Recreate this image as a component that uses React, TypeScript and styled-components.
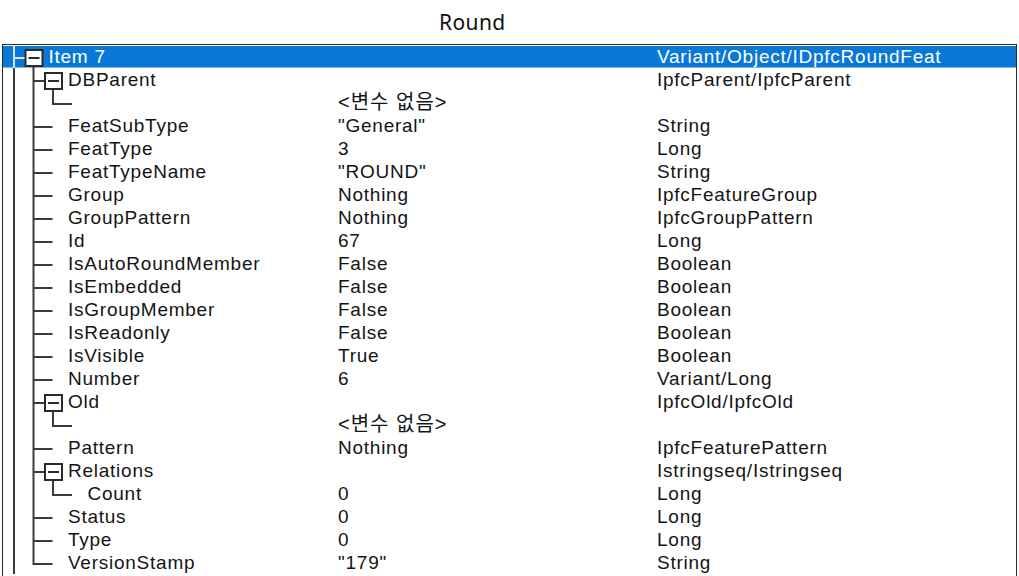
import React from "react";
import styled, { createGlobalStyle } from "styled-components";

const GlobalStyle = createGlobalStyle`
	html, body {
		margin: 0;
		height: 576px;
		overflow: hidden;
		background: #ffffff;
	}
`;

const ROW_H = 23;
const MID = 13;
// x of the tree rail for a given level, relative to the panel's content box
const lx = (k: number) => 11 + 19.5 * k;

type Row = {
	name: string;
	value?: string;
	type?: string;
	depth: number;
	open?: boolean;
	last?: boolean;
	selected?: boolean;
	empty?: boolean;
};

const rows: Row[] = [
	{ name: "Item 7", type: "Variant/Object/IDpfcRoundFeat", depth: 0, open: true, selected: true },
	{ name: "DBParent", type: "IpfcParent/IpfcParent", depth: 1, open: true },
	{ name: "", value: "<변수 없음>", depth: 2, last: true, empty: true },
	{ name: "FeatSubType", value: '"General"', type: "String", depth: 1 },
	{ name: "FeatType", value: "3", type: "Long", depth: 1 },
	{ name: "FeatTypeName", value: '"ROUND"', type: "String", depth: 1 },
	{ name: "Group", value: "Nothing", type: "IpfcFeatureGroup", depth: 1 },
	{ name: "GroupPattern", value: "Nothing", type: "IpfcGroupPattern", depth: 1 },
	{ name: "Id", value: "67", type: "Long", depth: 1 },
	{ name: "IsAutoRoundMember", value: "False", type: "Boolean", depth: 1 },
	{ name: "IsEmbedded", value: "False", type: "Boolean", depth: 1 },
	{ name: "IsGroupMember", value: "False", type: "Boolean", depth: 1 },
	{ name: "IsReadonly", value: "False", type: "Boolean", depth: 1 },
	{ name: "IsVisible", value: "True", type: "Boolean", depth: 1 },
	{ name: "Number", value: "6", type: "Variant/Long", depth: 1 },
	{ name: "Old", type: "IpfcOld/IpfcOld", depth: 1, open: true },
	{ name: "", value: "<변수 없음>", depth: 2, last: true, empty: true },
	{ name: "Pattern", value: "Nothing", type: "IpfcFeaturePattern", depth: 1 },
	{ name: "Relations", type: "Istringseq/Istringseq", depth: 1, open: true },
	{ name: "Count", value: "0", type: "Long", depth: 2, last: true },
	{ name: "Status", value: "0", type: "Long", depth: 1 },
	{ name: "Type", value: "0", type: "Long", depth: 1 },
	{ name: "VersionStamp", value: '"179"', type: "String", depth: 1, last: true },
];

const Page = styled.div`
	font-family: "Liberation Sans", "Noto Sans CJK KR", sans-serif;
	color: #141414;
`;

const Title = styled.h1`
	margin: 0;
	height: 44px;
	display: flex;
	align-items: center;
	padding-left: 439px;
	font-family: "Noto Sans", "Open Sans", sans-serif;
	font-size: 21px;
	font-weight: 400;
	letter-spacing: 0.4px;
	color: #111;
`;

const Panel = styled.div`
	margin-left: 2px;
	width: 1015px;
	height: 560px;
	box-sizing: border-box;
	border: 1px solid #2a2a2a;
	overflow: hidden;
	background: #fff;
`;

const RowBox = styled.div<{ $selected?: boolean }>`
	display: grid;
	grid-template-columns: 335px 319px 1fr;
	height: ${ROW_H}px;
	background: ${(p) => (p.$selected ? "#0a78d7" : "transparent")};
	box-shadow: ${(p) =>
		p.$selected ? "inset 0 1px 0 #ffffff, inset 0 -1px 0 #7db6ea" : "none"};
	color: ${(p) => (p.$selected ? "#ffffff" : "#141414")};
`;

const NameCell = styled.div`
	display: flex;
	align-items: flex-start;
	min-width: 0;
`;

const Text = styled.span<{ $hangul?: boolean }>`
	font-size: ${(p) => (p.$hangul ? "20px" : "19px")};
	letter-spacing: ${(p) => (p.$hangul ? "1px" : "0.75px")};
	line-height: ${ROW_H}px;
	white-space: nowrap;
	overflow: hidden;
`;

const Guide: React.FC<{ row: Row }> = ({ row }) => {
	const d = row.depth;
	const w = lx(d + 1) + 15;
	const c = row.selected ? "#d4e6f7" : "#3a3a3a";
	const x = lx(d);
	const bx = lx(d + 1);
	const rails = Array.from({ length: d }, (_, k) => k);
	return (
		<svg width={w} height={ROW_H} style={{ flex: "none" }}>
			{rails.map((k) => (
				<line key={k} x1={lx(k)} y1={0} x2={lx(k)} y2={ROW_H} stroke="#3a3a3a" strokeWidth={2} />
			))}
			<line x1={x} y1={0} x2={x} y2={row.last ? MID + 1 : ROW_H} stroke={c} strokeWidth={2} />
			{row.open ? (
				<>
					<line x1={x} y1={MID} x2={bx - 8} y2={MID} stroke={c} strokeWidth={2} />
					<line x1={bx} y1={MID + 8} x2={bx} y2={ROW_H} stroke="#3a3a3a" strokeWidth={2} />
					<rect x={bx - 8} y={MID - 8} width={17} height={16} fill="#fff" stroke="#2a2a2a" strokeWidth={2} />
					<line x1={bx - 5} y1={MID} x2={bx + 6} y2={MID} stroke="#2a2a2a" strokeWidth={2} />
				</>
			) : (
				<line x1={x} y1={MID} x2={x + 19} y2={MID} stroke={c} strokeWidth={2} />
			)}
		</svg>
	);
};

const TreeRow: React.FC<{ row: Row }> = ({ row }) => (
	<RowBox $selected={row.selected}>
		<NameCell>
			<Guide row={row} />
			<Text>{row.name}</Text>
		</NameCell>
		<Text $hangul={row.empty}>{row.value}</Text>
		<Text>{row.type}</Text>
	</RowBox>
);

export default function App() {
	return (
		<Page>
			<GlobalStyle />
			<Title>Round</Title>
			<Panel>
				{rows.map((r, i) => (
					<TreeRow key={i} row={r} />
				))}
			</Panel>
		</Page>
	);
}
